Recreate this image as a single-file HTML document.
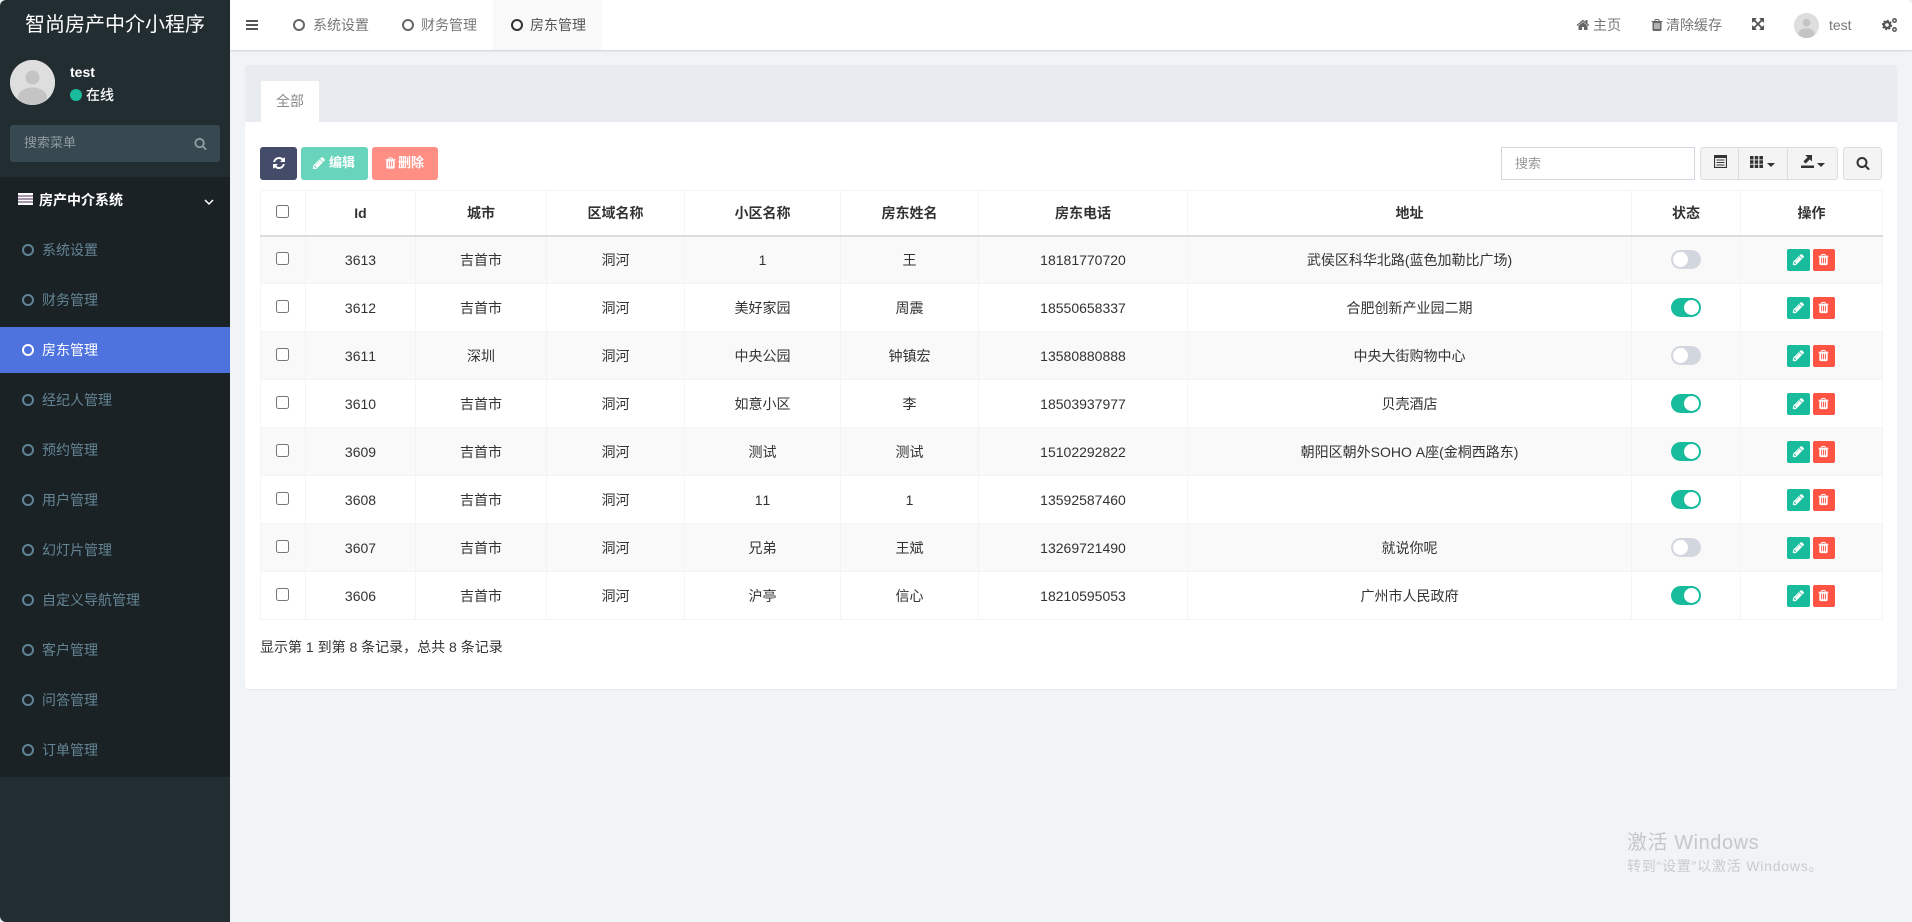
<!DOCTYPE html>
<html lang="zh"><head><meta charset="utf-8"><title>房东管理</title>
<style>
*{box-sizing:border-box}
html,body{margin:0;padding:0;width:1912px;height:922px;overflow:hidden;background:#f1f4f6;font-family:"Liberation Sans","Noto Sans CJK SC",sans-serif;font-size:14px;color:#333}
.a{position:absolute}
svg{display:block;fill:currentColor}
#side{left:0;top:0;width:230px;height:922px;background:#222d32}
#logo{left:0;top:0;width:230px;height:50px;line-height:50px;text-align:center;color:#fff;font-size:20px}
.av{border-radius:50%;background:#dedede;overflow:hidden}
#sb{left:10px;top:125px;width:210px;height:37px;background:#374850;border-radius:3px;color:#8f9ba1;line-height:36px;padding-left:14px;font-size:13px}
#menu{left:0;top:177px;width:230px;height:600px;background:#1a2226}
.mi{position:absolute;left:0;width:230px;height:46px;line-height:46px;color:#658594;padding-left:42px}
.mi i{position:absolute;left:22px;top:17px;width:12px;height:12px;border:2px solid #5f8496;border-radius:50%}
.mi.on{background:#4e73df;color:#fff}
.mi.on i{border-color:#fff}
#hd{left:230px;top:0;width:1682px;height:50px;background:#fff;box-shadow:0 1px 2px rgba(0,0,0,.15);color:#777}
.t{position:absolute;top:0;height:50px;line-height:50px;white-space:nowrap}
.t i{position:absolute;left:0;top:19px;width:12px;height:12px;border:2px solid #666;border-radius:50%}
#panel{left:245px;top:65px;width:1652px;height:624px;background:#fff;border-radius:3px;box-shadow:0 1px 1px rgba(0,0,0,.05)}
#tabs{left:0;top:0;width:1652px;height:57px;background:#e8ecf0;border-radius:3px 3px 0 0}
#tab{left:16px;top:16px;width:58px;height:41px;background:#fff;border-radius:2px 2px 0 0;text-align:center;line-height:41px;color:#8a8a8a}
.btn{position:absolute;top:147px;height:33px;border-radius:3px;color:#fff;font-weight:bold;font-size:13px;line-height:32px;white-space:nowrap}
#tb{position:absolute;left:260px;top:190px;width:1622px;table-layout:fixed;border-collapse:collapse;text-align:center;font-kerning:none}
#tb th,#tb td{border:1px solid #f4f4f4;padding:0;overflow:hidden;white-space:nowrap}
#tb th{height:45px;border-bottom:2px solid #ddd;font-weight:bold}
#tb td{height:48px}
#tb tr:nth-child(odd) td{background:#f9f9f9}
#tb input{display:block;margin:-3px 0 0 15px;width:13px;height:13px}
.sw{display:block;width:30px;height:19px;border-radius:10px;margin:-1px auto 0;background:#d2d6de;position:relative}
.sw:after{content:"";position:absolute;left:2px;top:2px;width:15px;height:15px;background:#fff;border-radius:50%}
.sw.on{background:#18bc9c}
.sw.on:after{left:13px}
.op{display:flex;justify-content:center;gap:3px;margin:0;padding-right:2px}
.op b{display:flex;align-items:center;justify-content:center;height:22px;border-radius:2px;color:#fff}
.op .e{width:23px;background:#18bc9c}.op .d{width:22px;background:#ff5344}
.tg{position:absolute;top:147px;height:33px;background:#f4f4f4;border:1px solid #ddd;color:#333}
.car{position:absolute;width:0;height:0;border-left:4px solid transparent;border-right:4px solid transparent;border-top:4px solid #333}
#cw{position:absolute;left:0;top:0;width:1912px;height:922px;overflow:hidden;pointer-events:none}
#cw div{position:absolute;left:0;top:0;width:1912px;height:922px;border-radius:6px;box-shadow:0 0 0 12px #f2f2f2}
</style></head><body>
<svg width="0" height="0" style="position:absolute"><defs>
<symbol id="pen" viewBox="0 0 1792 1792"><path d="M491 1536l91-91-235-235-91 91v107h128v128h107zm523-928q0-22-22-22-10 0-17 7l-542 542q-7 7-7 17 0 22 22 22 10 0 17-7l542-542q7-7 7-17zm-54-192l416 416-832 832h-416v-416zm683 96q0 53-37 90l-166 166-416-416 166-165q36-38 90-38 53 0 91 38l235 234q37 39 37 91z"/></symbol>
<symbol id="tr" viewBox="0 0 1792 1792"><path d="M704 1376v-704q0-14-9-23t-23-9h-64q-14 0-23 9t-9 23v704q0 14 9 23t23 9h64q14 0 23-9t9-23zm256 0v-704q0-14-9-23t-23-9h-64q-14 0-23 9t-9 23v704q0 14 9 23t23 9h64q14 0 23-9t9-23zm256 0v-704q0-14-9-23t-23-9h-64q-14 0-23 9t-9 23v704q0 14 9 23t23 9h64q14 0 23-9t9-23zm-544-992h448l-48-117q-7-9-17-11h-317q-10 2-17 11zm928 32v64q0 14-9 23t-23 9h-96v948q0 83-47 143.500t-113 60.500h-832q-66 0-113-58.500t-47-141.500v-952h-96q-14 0-23-9t-9-23v-64q0-14 9-23t23-9h309l70-167q15-37 54-63t79-26h320q40 0 79 26t54 63l70 167h309q14 0 23 9t9 23z"/></symbol>
<symbol id="se" viewBox="0 0 1792 1792"><path d="M1216 832q0-185-131.500-316.500t-316.500-131.500-316.500 131.500-131.500 316.500 131.500 316.500 316.500 131.500 316.500-131.500 131.500-316.500zm512 832q0 52-38 90t-90 38q-54 0-90-38l-343-342q-179 124-399 124-143 0-273.500-55.500t-225-150-150-225-55.500-273.500 55.500-273.500 150-225 225-150 273.500-55.500 273.500 55.500 225 150 150 225 55.500 273.500q0 220-124 399l343 343q37 37 37 90z"/></symbol>
</defs></svg>

<div id="side" class="a">
<div id="logo" class="a">智尚房产中介小程序</div>
<svg class="a av" style="left:10px;top:60px" width="45" height="45" viewBox="0 0 45 45"><rect width="45" height="45" fill="#dedede"/><circle cx="22.500" cy="17.500" r="7" fill="#c4c4c4"/><ellipse cx="22.500" cy="37" rx="14.500" ry="9.500" fill="#c4c4c4"/></svg>
<div class="a" style="left:70px;top:64px;color:#fff;font-weight:bold;line-height:16px">test</div>
<div class="a" style="left:70px;top:89px;width:12px;height:12px;border-radius:50%;background:#18bc9c"></div>
<div class="a" style="left:86px;top:87px;color:#fff;line-height:16px;font-weight:500">在线</div>
<div id="sb" class="a">搜索菜单<svg class="a" style="left:184px;top:12px;color:#8f9ba1" width="13" height="13"><use href="#se"/></svg></div>
<div id="menu" class="a">
<svg class="a" style="left:18px;top:16px" width="15" height="12"><rect width="15" height="12" fill="#fff"/><path d="M0 3h15M0 6h15M0 9h15" stroke="#4a2a5a" stroke-width="1"/></svg>
<div class="a" style="left:39px;top:14px;color:#fff;font-weight:bold;line-height:18px;font-size:14px">房产中介系统</div>
<svg class="a" style="left:204px;top:22px;fill:none" width="10" height="7"><path d="M1 1l4 4 4-4" stroke="#fff" stroke-width="1.500"/></svg>
<div class="mi" style="top:50px"><i></i>系统设置</div>
<div class="mi" style="top:100px"><i></i>财务管理</div>
<div class="mi on" style="top:150px"><i></i>房东管理</div>
<div class="mi" style="top:200px"><i></i>经纪人管理</div>
<div class="mi" style="top:250px"><i></i>预约管理</div>
<div class="mi" style="top:300px"><i></i>用户管理</div>
<div class="mi" style="top:350px"><i></i>幻灯片管理</div>
<div class="mi" style="top:400px"><i></i>自定义导航管理</div>
<div class="mi" style="top:450px"><i></i>客户管理</div>
<div class="mi" style="top:500px"><i></i>问答管理</div>
<div class="mi" style="top:550px"><i></i>订单管理</div>
</div></div>

<div id="hd" class="a">
<svg class="a" style="left:15px;top:18px;color:#555" width="14" height="14" viewBox="0 0 1792 1792" preserveAspectRatio="none"><path d="M1664 1344v128q0 26-19 45t-45 19h-1408q-26 0-45-19t-19-45v-128q0-26 19-45t45-19h1408q26 0 45 19t19 45zm0-512v128q0 26-19 45t-45 19h-1408q-26 0-45-19t-19-45v-128q0-26 19-45t45-19h1408q26 0 45 19t19 45zm0-512v128q0 26-19 45t-45 19h-1408q-26 0-45-19t-19-45v-128q0-26 19-45t45-19h1408q26 0 45 19t19 45z"/></svg>
<div class="t" style="left:63px;width:120px;padding-left:20px"><i></i>系统设置</div>
<div class="t" style="left:172px;width:120px;padding-left:19px"><i></i>财务管理</div>
<div class="a" style="left:263px;top:0;width:109px;height:50px;background:#f9f9f9"></div>
<div class="t" style="left:281px;width:90px;padding-left:19px;color:#555"><i style="border-color:#333"></i>房东管理</div>
<svg class="a" style="left:1346px;top:18px;color:#666" width="14" height="14" viewBox="0 0 1792 1792"><path d="M1472 992v480q0 26-19 45t-45 19h-384v-384h-256v384h-384q-26 0-45-19t-19-45v-480q0-1 .5-3t.5-3l575-474 575 474q1 2 1 6zm223-69l-62 74q-8 9-21 11h-3q-13 0-21-7l-692-577-692 577q-12 8-24 7-13-2-21-11l-62-74q-8-10-7-23.500t11-21.500l719-599q32-26 76-26t76 26l244 204v-195q0-14 9-23t23-9h192q14 0 23 9t9 23v408l219 182q10 8 11 21.500t-7 23.500z"/></svg>
<div class="t" style="left:1363px">主页</div>
<svg class="a" style="left:1420px;top:18px;color:#666" width="14" height="14"><use href="#tr"/></svg>
<div class="t" style="left:1436px">清除缓存</div>
<svg class="a" style="left:1522px;top:18px;color:#555" width="14" height="14" viewBox="0 0 1792 1792"><path d="M1283 413l-355 355 355 355 144-144q29-31 70-14 39 17 39 59v448q0 26-19 45t-45 19h-448q-42 0-59-40-17-39 14-69l144-144-355-355-355 355 144 144q31 30 14 69-17 40-59 40h-448q-26 0-45-19t-19-45v-448q0-42 40-59 39-17 69 14l144 144 355-355-355-355-144 144q-19 19-45 19-12 0-24-5-40-17-40-59v-448q0-26 19-45t45-19h448q42 0 59 40 17 39-14 69l-144 144 355 355 355-355-144-144q-31-30-14-69 17-40 59-40h448q26 0 45 19t19 45v448q0 42-39 59-13 5-25 5-26 0-45-19z"/></svg>
<svg class="a av" style="left:1564px;top:13px" width="25" height="25" viewBox="0 0 45 45"><rect width="45" height="45" fill="#dedede"/><circle cx="22.500" cy="17.500" r="7" fill="#c4c4c4"/><ellipse cx="22.500" cy="37" rx="14.500" ry="9.500" fill="#c4c4c4"/></svg>
<div class="t" style="left:1599px">test</div>
<svg class="a" style="left:1652px;top:18px;fill:none;color:#555" width="16" height="14" viewBox="0 0 16 14"><circle cx="5" cy="7" r="3" stroke="currentColor" stroke-width="2.400"/><circle cx="5" cy="7" r="4.500" stroke="currentColor" stroke-width="1.400" stroke-dasharray="1.800 1.700"/><circle cx="12.500" cy="2.500" r="1.700" stroke="currentColor" stroke-width="1.500"/><circle cx="12.500" cy="11.500" r="1.700" stroke="currentColor" stroke-width="1.500"/></svg>
</div>

<div id="panel" class="a">
<div id="tabs" class="a"></div><div id="tab" class="a">全部</div>
</div>

<div class="btn" style="left:260px;width:37px;background:#444c69">
<svg class="a" style="left:12px;top:9px" width="14" height="14" viewBox="0 0 1792 1792"><path d="M1639 1056q0 5-1 7-64 268-268 434.500t-478 166.500q-146 0-282.500-55t-243.500-157l-129 129q-19 19-45 19t-45-19-19-45v-448q0-26 19-45t45-19h448q26 0 45 19t19 45-19 45l-137 137q71 66 161 102t187 36q134 0 250-65t186-179q11-17 53-117 8-23 30-23h192q13 0 22.500 9.500t9.500 22.500zm25-800v448q0 26-19 45t-45 19h-448q-26 0-45-19t-19-45 19-45l138-138q-148-137-349-137-134 0-250 65t-186 179q-11 17-53 117-8 23-30 23h-199q-13 0-22.500-9.500t-9.500-22.500v-7q65-268 270-434.500t480-166.500q146 0 284 55.500t245 156.500l130-129q19-19 45-19t45 19 19 45z"/></svg></div>
<div class="btn" style="left:301px;width:67px;background:#68d4bc;padding-left:28px"><svg class="a" style="left:11px;top:9px" width="14" height="14"><use href="#pen"/></svg>编辑</div>
<div class="btn" style="left:372px;width:66px;background:#ff8f85;padding-left:26px"><svg class="a" style="left:12px;top:9px" width="13" height="14"><use href="#tr"/></svg>删除</div>

<div class="a" style="left:1501px;top:147px;width:194px;height:33px;border:1px solid #d2d6de;background:#fff;color:#999;font-size:13px;line-height:31px;padding-left:13px">搜索</div>
<div class="tg" style="left:1700px;width:39px;border-radius:3px 0 0 3px"><svg class="a" style="left:13px;top:7px;fill:none" width="13" height="13"><rect x=".5" y=".5" width="12" height="12" stroke="#333" stroke-width="1.200"/><path d="M0 2h13" stroke="#333" stroke-width="2"/><path d="M2.500 5h8M2.500 7.500h8M2.500 10h8" stroke="#333"/></svg></div>
<div class="tg" style="left:1738px;width:50px"><svg class="a" style="left:11px;top:8px" width="13" height="12"><path d="M0 0h3.500v3.500H0zM4.700 0h3.500v3.500H4.700zM9.400 0H13v3.500H9.400zM0 4.300h3.500v3.500H0zM4.700 4.300h3.500v3.500H4.700zM9.400 4.300H13v3.500H9.400zM0 8.600h3.500V12H0zM4.700 8.600h3.500V12H4.700zM9.400 8.600H13V12H9.400z"/></svg><span class="car" style="left:28px;top:15px"></span></div>
<div class="tg" style="left:1787px;width:51px;border-radius:0 3px 3px 0"><svg class="a" style="left:13px;top:7px" width="14" height="13"><path d="M0 10.500h13V13H0zM4.200 0H11v6.500L8.800 4.400 4.600 8.600 2.400 6.400 6.600 2.200z"/></svg><span class="car" style="left:29px;top:15px"></span></div>
<div class="tg" style="left:1843px;width:39px;border-radius:3px"><svg class="a" style="left:12px;top:8px" width="14" height="14"><use href="#se"/></svg></div>

<table id="tb"><colgroup><col style="width:45px"><col style="width:110px"><col style="width:131px"><col style="width:138px"><col style="width:156px"><col style="width:138px"><col style="width:209px"><col style="width:444px"><col style="width:109px"><col style="width:142px"></colgroup>
<thead><tr><th><input type="checkbox"></th><th>Id</th><th>城市</th><th>区域名称</th><th>小区名称</th><th>房东姓名</th><th>房东电话</th><th>地址</th><th>状态</th><th>操作</th></tr></thead>
<tbody>
<tr><td><input type="checkbox"></td><td>3613</td><td>吉首市</td><td>洞河</td><td>1</td><td>王</td><td>18181770720</td><td>武侯区科华北路(蓝色加勒比广场)</td><td><span class="sw"></span></td><td><div class="op"><b class="e"><svg width="13" height="13"><use href="#pen"/></svg></b><b class="d"><svg width="13" height="13"><use href="#tr"/></svg></b></div></td></tr>
<tr><td><input type="checkbox"></td><td>3612</td><td>吉首市</td><td>洞河</td><td>美好家园</td><td>周震</td><td>18550658337</td><td>合肥创新产业园二期</td><td><span class="sw on"></span></td><td><div class="op"><b class="e"><svg width="13" height="13"><use href="#pen"/></svg></b><b class="d"><svg width="13" height="13"><use href="#tr"/></svg></b></div></td></tr>
<tr><td><input type="checkbox"></td><td>3611</td><td>深圳</td><td>洞河</td><td>中央公园</td><td>钟镇宏</td><td>13580880888</td><td>中央大街购物中心</td><td><span class="sw"></span></td><td><div class="op"><b class="e"><svg width="13" height="13"><use href="#pen"/></svg></b><b class="d"><svg width="13" height="13"><use href="#tr"/></svg></b></div></td></tr>
<tr><td><input type="checkbox"></td><td>3610</td><td>吉首市</td><td>洞河</td><td>如意小区</td><td>李</td><td>18503937977</td><td>贝壳酒店</td><td><span class="sw on"></span></td><td><div class="op"><b class="e"><svg width="13" height="13"><use href="#pen"/></svg></b><b class="d"><svg width="13" height="13"><use href="#tr"/></svg></b></div></td></tr>
<tr><td><input type="checkbox"></td><td>3609</td><td>吉首市</td><td>洞河</td><td>测试</td><td>测试</td><td>15102292822</td><td>朝阳区朝外SOHO A座(金桐西路东)</td><td><span class="sw on"></span></td><td><div class="op"><b class="e"><svg width="13" height="13"><use href="#pen"/></svg></b><b class="d"><svg width="13" height="13"><use href="#tr"/></svg></b></div></td></tr>
<tr><td><input type="checkbox"></td><td>3608</td><td>吉首市</td><td>洞河</td><td>11</td><td>1</td><td>13592587460</td><td></td><td><span class="sw on"></span></td><td><div class="op"><b class="e"><svg width="13" height="13"><use href="#pen"/></svg></b><b class="d"><svg width="13" height="13"><use href="#tr"/></svg></b></div></td></tr>
<tr><td><input type="checkbox"></td><td>3607</td><td>吉首市</td><td>洞河</td><td>兄弟</td><td>王斌</td><td>13269721490</td><td>就说你呢</td><td><span class="sw"></span></td><td><div class="op"><b class="e"><svg width="13" height="13"><use href="#pen"/></svg></b><b class="d"><svg width="13" height="13"><use href="#tr"/></svg></b></div></td></tr>
<tr><td><input type="checkbox"></td><td>3606</td><td>吉首市</td><td>洞河</td><td>沪亭</td><td>信心</td><td>18210595053</td><td>广州市人民政府</td><td><span class="sw on"></span></td><td><div class="op"><b class="e"><svg width="13" height="13"><use href="#pen"/></svg></b><b class="d"><svg width="13" height="13"><use href="#tr"/></svg></b></div></td></tr>
</tbody></table>
<div class="a" style="left:260px;top:637px;line-height:20px;white-space:nowrap">显示第 1 到第 8 条记录，总共 8 条记录</div>

<div class="a" style="left:1627px;top:829px;font-size:20px;line-height:28px;letter-spacing:.55px;color:#c5c7c9;white-space:nowrap">激活 Windows</div>
<div class="a" style="left:1627px;top:856px;font-size:14px;line-height:20px;letter-spacing:.8px;color:#c9cbcd;white-space:nowrap">转到“设置”以激活 Windows。</div>
<div id="cw"><div></div></div>
</body></html>
